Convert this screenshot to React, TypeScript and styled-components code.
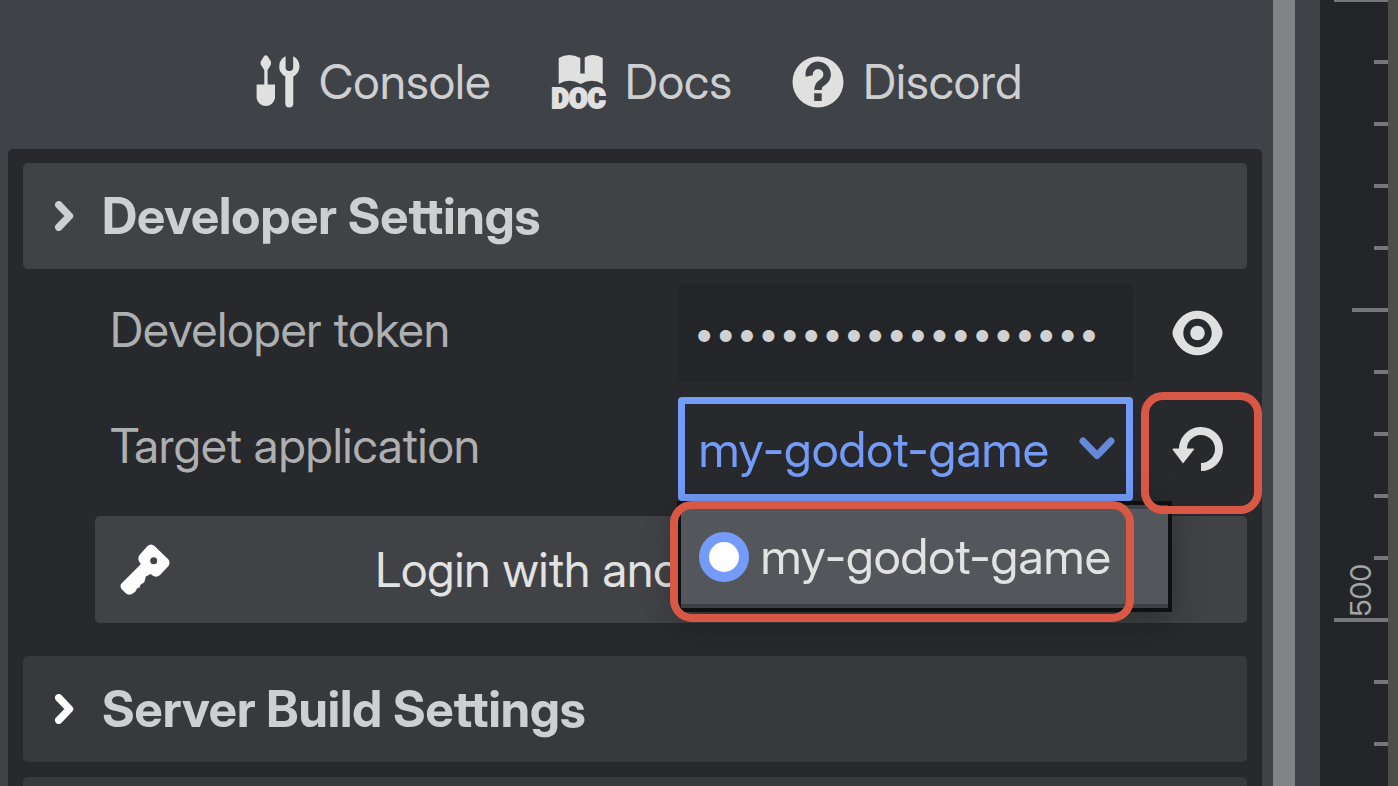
import React, { useState } from "react";
import styled, { createGlobalStyle } from "styled-components";

const color = {
  dock: "#3f4247",
  panel: "#28292d",
  header: "#414245",
  headerDim: "#38393c",
  field: "#242528",
  accent: "#749bf7",
  mark: "#d95845",
  icon: "#e0e0e0",
  text: "#cdcfd1",
  label: "#aeafb1",
};

const GlobalStyle = createGlobalStyle`
  *, *::before, *::after { box-sizing: border-box; }
  body {
    margin: 0;
    background: ${color.dock};
    font-family: "Inter Display", Inter, "Liberation Sans", sans-serif;
    font-size: 48px;
    line-height: 60px;
  }
  button, input, select { font: inherit; color: inherit; }
`;

const Editor = styled.div`
  display: flex;
  height: 100vh;
  overflow: hidden;
`;

const Dock = styled.main`
  flex: 1;
  min-width: 0;
  display: flex;
  flex-direction: column;
  padding: 0 11px 0 8px;
`;

const Toolbar = styled.nav`
  flex: none;
  display: flex;
  justify-content: center;
  align-items: center;
  gap: 60px;
  height: 149px;
  padding: 14px 0 0 8px;
`;

const ToolLink = styled.a`
  display: flex;
  align-items: center;
  gap: 19px;
  color: ${color.text};
  text-decoration: none;
  white-space: nowrap;
`;

const Panel = styled.div`
  flex: 1;
  display: flex;
  flex-direction: column;
  gap: 15px;
  padding: 14px 15px 0;
  border-radius: 5px 5px 0 0;
  background: ${color.panel};
`;

const SectionHeader = styled.button<{ $dim?: boolean }>`
  flex: none;
  display: flex;
  align-items: center;
  gap: 28px;
  width: 100%;
  height: 106px;
  padding: 0 32px;
  border: 0;
  border-radius: 5px;
  background: ${(p) => (p.$dim ? color.headerDim : color.header)};
  color: ${color.text};
  font-size: 50px;
  font-weight: 700;
  text-align: left;
`;

const SectionBody = styled.div`
  display: flex;
  flex-direction: column;
  gap: 15px;
  padding-bottom: 18px;
`;

const PropertyRow = styled.div`
  display: grid;
  grid-template-columns: minmax(0, 1fr) minmax(0, 1fr);
  align-items: center;
  padding-left: 85px;
`;

const PropertyLabel = styled.label`
  padding: 0 0 6px 2px;
  color: ${color.label};
  white-space: nowrap;
`;

const PropertyField = styled.div`
  display: flex;
  align-items: stretch;
  gap: 15px;
`;

const TokenInput = styled.input`
  flex: 1;
  min-width: 0;
  height: 98px;
  padding: 0 16px;
  border: 0;
  border-radius: 5px;
  outline: 0;
  background: ${color.field};
  color: #d0d1d3;
  font-family: Inter, sans-serif;
  font-size: 38px;
`;

const IconButton = styled.button`
  position: relative;
  flex: none;
  display: grid;
  place-items: center;
  width: 99px;
  padding: 0;
  border: 0;
  background: transparent;
`;

const SelectBox = styled.div`
  position: relative;
  flex: 1;
  min-width: 0;
  display: flex;
  align-items: center;
  height: 104px;
  border: 7px solid ${color.accent};
  border-radius: 4px;
  color: ${color.accent};
  font-size: 49px;
`;

const AppSelect = styled.select`
  appearance: none;
  flex: 1;
  min-width: 0;
  height: 100%;
  padding: 2px 0 0 14px;
  border: 0;
  outline: 0;
  background: transparent;
`;

const SelectArrow = styled.svg`
  flex: none;
  margin-right: 11px;
  pointer-events: none;
`;

const Popup = styled.div`
  position: absolute;
  z-index: 2;
  top: 97px;
  left: -8px;
  width: calc(100% + 54px);
  padding: 4px 0;
  border: 4px solid #0f1012;
  background: #3d4146;
  box-shadow: 0 10px 32px rgba(0, 0, 0, 0.3);
`;

const Option = styled.label`
  display: flex;
  align-items: center;
  gap: 12px;
  height: 95px;
  padding: 0 18px;
  background: #53565b;
  color: #e2e2e3;
  white-space: nowrap;
`;

const OptionRadio = styled.input`
  appearance: none;
  flex: none;
  width: 50px;
  height: 50px;
  margin: 0;
  border: 10px solid ${color.accent};
  border-radius: 50%;
  background: #fff;
`;

const Highlight = styled.span<{ $inset: string }>`
  position: absolute;
  z-index: 3;
  inset: ${(p) => p.$inset};
  border: 8px solid ${color.mark};
  border-radius: 22px;
  pointer-events: none;
`;

const LoginButton = styled.button`
  display: flex;
  align-items: center;
  height: 107px;
  margin-left: 72px;
  padding: 0 99px 0 25px;
  border: 0;
  border-radius: 5px;
  background: ${color.header};
  color: #e2e2e3;
`;

const LoginText = styled.span`
  flex: 1;
  text-align: center;
  white-space: nowrap;
`;

const Scrollbar = styled.div`
  flex: none;
  width: 22px;
  margin-right: 25px;
  background: #808487;
`;

const Ruler = styled.div`
  flex: none;
  display: flex;
  flex-direction: column;
  align-items: flex-end;
  width: 68px;
  background: ${color.field};
`;

const Tick = styled.div<{ $length: number; $first?: boolean }>`
  flex: none;
  display: flex;
  flex-direction: column;
  align-items: center;
  justify-content: flex-end;
  width: ${(p) => p.$length}px;
  height: ${(p) => (p.$first ? 2 : 62)}px;
  border-bottom: ${(p) => (p.$first ? 2 : 4)}px solid #76777a;
`;

const TickLabel = styled.span`
  writing-mode: vertical-rl;
  transform: rotate(180deg);
  padding-top: 2px;
  color: #a5a6a8;
  font-size: 29px;
  line-height: 36px;
`;

const Canvas = styled.div`
  flex: none;
  width: 10px;
  background: #4d4d4c;
`;

const ToolsIcon = () => (
  <svg width="44" height="53" viewBox="0 0 44 53" fill={color.icon} aria-hidden="true">
    <path d="M8 1.200Q9.800-.5 11.600 1.200L14.700 6Q15.500 8 14.700 10L11.600 15V29.500H19V43a9.300 9.300 0 0 1-18.400 0V29.500H8.300V15L5 10Q4.200 8 5 6Z" />
    <path d="M29.600 1.300A11.300 11.300 0 0 0 29.300 21.500V48.500a4 4 0 0 0 8 0V21.500A11.300 11.300 0 0 0 37.200 1.300V12.500a3.700 3.400 0 0 1-7.600 0Z" />
  </svg>
);

const DocIcon = () => (
  <svg width="55" height="56" viewBox="0 0 55 56" fill={color.icon} overflow="visible" aria-hidden="true">
    <path d="M7.700 4Q18-2 29.300 4V19.500H33.700V3.500Q42-1.500 51.700 4V30Q41 23.500 29.700 30Q18 23.500 7.700 30Z" />
    <text x="27.500" y="53.500" textAnchor="middle" fontFamily="Roboto, sans-serif" fontWeight="900" fontSize="27" stroke={color.icon} strokeWidth="2">
      DOC
    </text>
  </svg>
);

const HelpIcon = () => (
  <svg width="52" height="52" viewBox="0 0 52 52" aria-hidden="true">
    <circle cx="26" cy="26" r="25.500" fill={color.icon} />
    <path d="M17.300 20A9 9 0 1 1 33.500 23.500Q32 25.500 29 27.500Q26 29.500 26 34" fill="none" stroke={color.dock} strokeWidth="7.400" />
    <path d="M22.200 37.300H29.700V45H22.200Z" fill={color.dock} />
  </svg>
);

const Chevron = ({ stroke }: { stroke: string }) => (
  <svg width="19" height="30" viewBox="0 0 19 30" fill="none" stroke={stroke} strokeWidth="7.500" strokeLinecap="round" strokeLinejoin="round" aria-hidden="true">
    <path d="M3.800 3.800 14.500 15 3.800 26.200" />
  </svg>
);

const EyeIcon = () => (
  <svg width="51" height="46" viewBox="0 0 51 46" fill={color.icon} aria-hidden="true">
    <path
      fillRule="evenodd"
      d="M25.500.700C36 .700 45 7.500 49.700 19Q51.300 23 49.700 27C45 38.500 36 45.300 25.500 45.300S6 38.500 1.300 27Q-.3 23 1.300 19C6 7.500 15 .700 25.500.700ZM25.500 8.800a14.200 14.200 0 1 0 0 28.400a14.200 14.200 0 1 0 0-28.400Z"
    />
    <circle cx="25.500" cy="23" r="7.300" />
  </svg>
);

const ReloadIcon = () => (
  <svg width="51" height="46" viewBox="0 0 51 46" aria-hidden="true">
    <path d="M11 24A18 18 0 1 1 29 41" fill="none" stroke={color.icon} strokeWidth="8" />
    <path d="M1.500 22.500 21.500 22.500Q22.500 22.800 21.800 23.800L11 37.500.700 23.800Q0 22.800 1.500 22.500Z" fill={color.icon} />
  </svg>
);

const KeyIcon = () => (
  <svg width="50" height="51" viewBox="0 0 50 51" fill="#fff" aria-hidden="true">
    <path
      fillRule="evenodd"
      d="M27.500 2Q31-1 34.500 2L48.500 15.500Q50.500 19 48.500 22L40 31Q36.500 34 32.500 31.500L30.700 30 25.800 32.500 24.300 38.300 20.500 40.800 19.500 43.500 17 44.500 15.500 47.500 12 50Q8.500 51.500 6 49.500L1.500 45Q-.5 41.500 1.500 39.500L20.500 20.500Q21 19.500 19 17.500Q17.500 13.500 19.500 11ZM33.700 13.200a3.500 3.500 0 1 0 0 7a3.500 3.500 0 1 0 0-7Z"
    />
  </svg>
);

const tickLengths = [54, 14, 14, 14, 14, 36, 14, 14, 14, 14, 54, 14, 14];

export default function App() {
  const [token, setToken] = useState("a".repeat(19));
  return (
    <Editor>
      <GlobalStyle />
      <Dock>
        <Toolbar>
          <ToolLink href="#console">
            <ToolsIcon />
            Console
          </ToolLink>
          <ToolLink href="#docs">
            <DocIcon />
            Docs
          </ToolLink>
          <ToolLink href="#discord">
            <HelpIcon />
            Discord
          </ToolLink>
        </Toolbar>
        <Panel>
          <SectionHeader type="button">
            <Chevron stroke={color.text} />
            Developer Settings
          </SectionHeader>
          <SectionBody>
            <PropertyRow>
              <PropertyLabel htmlFor="token">Developer token</PropertyLabel>
              <PropertyField>
                <TokenInput id="token" type="password" value={token} onChange={(e) => setToken(e.target.value)} />
                <IconButton type="button" aria-label="Show token">
                  <EyeIcon />
                </IconButton>
              </PropertyField>
            </PropertyRow>
            <PropertyRow>
              <PropertyLabel htmlFor="application">Target application</PropertyLabel>
              <PropertyField>
                <SelectBox>
                  <AppSelect id="application">
                    <option>my-godot-game</option>
                  </AppSelect>
                  <SelectArrow width="36" height="24" viewBox="0 0 36 24" fill="none" stroke="#6688d8" strokeWidth="7" strokeLinecap="round" strokeLinejoin="round" aria-hidden="true">
                    <path d="M4 4 18 18.500 32 4" />
                  </SelectArrow>
                  <Popup>
                    <Option>
                      <OptionRadio type="radio" name="application-option" defaultChecked />
                      my-godot-game
                    </Option>
                    <Highlight $inset="-4px 34px -14px -11px" />
                  </Popup>
                </SelectBox>
                <IconButton type="button" aria-label="Reload applications">
                  <ReloadIcon />
                  <Highlight $inset="-5px -15px -13px -7px" />
                </IconButton>
              </PropertyField>
            </PropertyRow>
            <LoginButton type="button">
              <KeyIcon />
              <LoginText>Login with another account</LoginText>
            </LoginButton>
          </SectionBody>
          <SectionHeader type="button" $dim>
            <Chevron stroke="#fff" />
            Server Build Settings
          </SectionHeader>
          <SectionHeader type="button" $dim aria-label="More settings" />
        </Panel>
      </Dock>
      <Scrollbar />
      <Ruler>
        {tickLengths.map((length, i) => (
          <Tick key={i} $length={length} $first={i === 0}>
            {i === 10 && <TickLabel>500</TickLabel>}
          </Tick>
        ))}
      </Ruler>
      <Canvas />
    </Editor>
  );
}
